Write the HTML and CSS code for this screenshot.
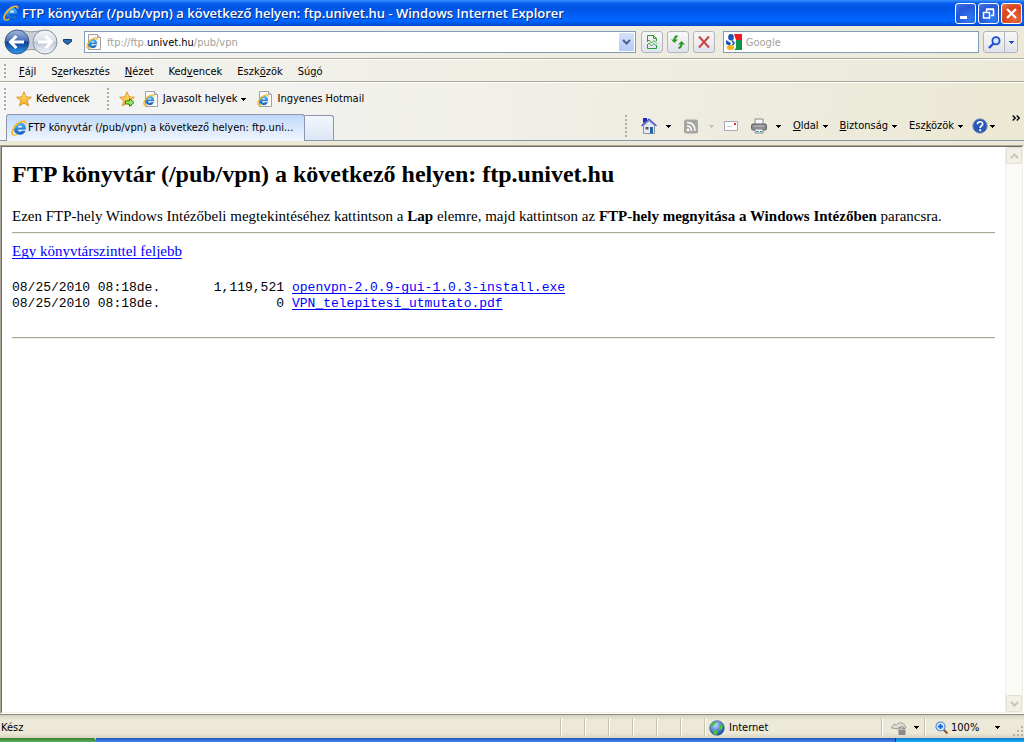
FILE: index.html
```html
<!DOCTYPE html>
<html lang="hu">
<head>
<meta charset="utf-8">
<title>FTP könyvtár (/pub/vpn) a következő helyen: ftp.univet.hu</title>
<link rel="stylesheet" href="styles.css">
</head>
<body>
<svg class="defs" aria-hidden="true">
  <defs>
    <linearGradient id="blueE" x1="0" y1="0" x2="0" y2="1"><stop offset="0" stop-color="#4fb8f4"/><stop offset="1" stop-color="#0b62c4"/></linearGradient>
    <linearGradient id="gold" x1="0" y1="0" x2="0" y2="1"><stop offset="0" stop-color="#ffe680"/><stop offset="1" stop-color="#f7a414"/></linearGradient>
    <linearGradient id="backG" x1="0" y1="0" x2="0" y2="1"><stop offset="0" stop-color="#a5badb"/><stop offset=".45" stop-color="#4a70b4"/><stop offset=".5" stop-color="#0d3c91"/><stop offset="1" stop-color="#2f9cf0"/></linearGradient>
    <linearGradient id="fwdG" x1="0" y1="0" x2="0" y2="1"><stop offset="0" stop-color="#f4f6f9"/><stop offset=".45" stop-color="#dde1e8"/><stop offset=".5" stop-color="#bcc5d3"/><stop offset="1" stop-color="#f3f7fb"/></linearGradient>
    <radialGradient id="globeG" cx=".4" cy=".3" r=".7"><stop offset="0" stop-color="#b8dcff"/><stop offset="1" stop-color="#1848a8"/></radialGradient>
    <symbol id="ie" viewBox="0 0 16 16">
      <path d="M5.400 9.300h9c.5-3.800-1.600-6.300-5.200-6.300C5.600 3 3 5.400 3 8.800s2.500 5.700 6 5.700c2.600 0 4.500-1.300 5.200-3.500h-3.400c-.4.600-1 .9-1.800.9-1.400 0-2.300-.9-2.400-2.600" fill="url(#blueE)" stroke="#0c4f9e" stroke-width=".4"/>
      <path d="M6.800 7.400c.2-1.200 1-1.900 2.200-1.900s2 .7 2.100 1.900z" fill="#e2f3ff"/>
      <path d="M2.500 15C-1.500 13.800 3.500 4.500 10 1.900c2.800-1.200 5-.8 4.600 1.800" fill="none" stroke="#f4b92c" stroke-width="1.700"/>
      <path d="M2.500 15c1.300.3 2.500-.2 3.800-1" fill="none" stroke="#f4b92c" stroke-width="1.400"/>
    </symbol>
    <symbol id="page" viewBox="0 0 16 16">
      <path d="M2.500.500h9l3 3v12h-12z" fill="#fafafa" stroke="#a2a2a2"/><path d="M11.500.500v3h3" fill="#ddd" stroke="#a2a2a2"/>
      <svg x="0" y="3" width="12" height="12"><use href="#ie"/></svg>
    </symbol>
    <symbol id="star" viewBox="0 0 16 16"><path d="M8 .8l2 5 5.400.4-4.200 3.500 1.500 5.300L8 12.100 3.300 15l1.500-5.300L.6 6.200 6 5.800z" fill="url(#gold)" stroke="#d08c1c" stroke-width=".8"/></symbol>
    <symbol id="staradd" viewBox="0 0 16 16"><use href="#star"/><path d="M6.500 10h4V7.700l4.500 3.800-4.500 3.800V13h-4z" fill="#9ae86a" stroke="#238b19"/></symbol>
    <symbol id="down" viewBox="0 0 5 3"><path d="M0 0h5v1H4v1H3v1H2V2H1V1H0z" fill="currentColor"/></symbol>
  </defs>
</svg>

<header class="titlebar">
  <svg class="i16"><use href="#ie"/></svg>
  <span class="caption">FTP könyvtár (/pub/vpn) a következő helyen: ftp.univet.hu - Windows Internet Explorer</span>
  <button class="win" aria-label="Kis méret"><svg viewBox="0 0 19 19"><path d="M4 12h7v3H4z" fill="#fff"/></svg></button>
  <button class="win" aria-label="Előző méret"><svg viewBox="0 0 19 19"><path d="M7.500 8V5.500h7v6H12M7 5h8" fill="none" stroke="#fff" stroke-width="1.500"/><path d="M4.500 8.500h6v5.500h-6zM4 8.500h7" fill="none" stroke="#fff" stroke-width="1.500"/></svg></button>
  <button class="win close" aria-label="Bezárás"><svg viewBox="0 0 19 19"><path d="M5 5l9 9M14 5l-9 9" stroke="#fff" stroke-width="2.200"/></svg></button>
</header>

<div class="addressbar">
  <div class="nav">
    <svg viewBox="0 0 56 30" aria-hidden="true"><path d="M8 4C16 1 20 4 28 4S40 1 48 4c9 4 8 18 0 21-8 2-12-2-20-2S16 28 8 25" fill="#c9cdd4" stroke="#8b929d"/></svg>
    <button class="round" aria-label="Vissza"><svg viewBox="0 0 26 26"><circle cx="13" cy="13" r="12" fill="url(#backG)" stroke="#3a5a8c"/><path d="M12.500 7L6.500 13l6 6M7.500 13H20" fill="none" stroke="#fff" stroke-width="3"/></svg></button>
    <button class="round" aria-label="Előre"><svg viewBox="0 0 26 26"><circle cx="13" cy="13" r="12" fill="url(#fwdG)" stroke="#8793a8"/><path d="M13.500 7l6 6-6 6M18.500 13H6" fill="none" stroke="#fff" stroke-width="3"/></svg></button>
  </div>
  <button class="plain recent" aria-label="Legutóbbi lapok"><svg viewBox="0 0 9 6"><path d="M.5.500h8v2L4.500 5.700.5 2.500z" fill="#2a68b0" stroke="#123a78"/></svg></button>
  <div class="field url">
    <svg class="i16"><use href="#page"/></svg>
    <span class="address" role="textbox" tabindex="0" aria-label="Cím">ftp://ftp.<b>univet.hu</b>/pub/vpn</span>
    <button class="combo" aria-label="Címek listája"><svg viewBox="0 0 9 6"><path d="M1 1l3.500 3.500L8 1" fill="none" stroke="#4d6185" stroke-width="2"/></svg></button>
  </div>
  <button class="tool" aria-label="Kompatibilitási nézet"><svg viewBox="0 0 16 16"><path d="M3.500 7V1.500h6l3 3V7M9.500 1.500v3h3M3.500 11v3.500h9V11" fill="none" stroke="#2d9a36"/><path d="M3 8l2-2 2.500 3L10 6.500 13 9.500M3 11l2-2 2.500 3L10 9.500l3 3" fill="none" stroke="#2d9a36" stroke-width=".9"/></svg></button>
  <button class="tool" aria-label="Frissítés"><svg viewBox="0 0 16 16"><path d="M7.500 2C5 2.500 4.500 4 4.500 6" fill="none" stroke="#2c9a20" stroke-width="2"/><path d="M1 5.500h7L4.500 9z" fill="#2c9a20"/><path d="M8.500 14c2.500-.5 3-2 3-4" fill="none" stroke="#2c9a20" stroke-width="2"/><path d="M8 10.500h7L11.500 7z" fill="#2c9a20"/></svg></button>
  <button class="tool" aria-label="Leállítás"><svg viewBox="0 0 16 16"><path d="M3 2.500l10 11M13 2.500l-10 11" stroke="#c94444" stroke-width="2"/></svg></button>
  <label class="field search">
    <svg class="i16" viewBox="0 0 16 16"><path d="M0 0h16v16H0z" fill="#fff"/><path d="M8 0h8v6h-6z" fill="#ee1c1c"/><path d="M10 6h6v10H8c4-3 1-5 2-10z" fill="#109447"/><path d="M0 6l5 3-1 3-4-2z" fill="#1b56b5"/><ellipse cx="5" cy="3.200" rx="2.800" ry="3.200" fill="#1b56b5"/><path d="M6 6.500l2 2.500-1.500 2" stroke="#1b56b5" stroke-width="1.600" fill="none"/><ellipse cx="4.500" cy="13.500" rx="3.700" ry="2.500" fill="#f5b317"/></svg>
    <input type="text" placeholder="Google" aria-label="Keresés">
  </label>
  <div class="split">
    <button aria-label="Keresés indítása"><svg class="mag" viewBox="0 0 13 13"><circle cx="8" cy="4.800" r="3.600" fill="#d6e9ff" stroke="#1b4fd0" stroke-width="1.800"/><path d="M5.500 7.500L1 12" stroke="#1b4fd0" stroke-width="2.400"/></svg></button>
    <button class="narrow" aria-label="Keresési beállítások"><svg class="arrow blue"><use href="#down"/></svg></button>
  </div>
</div>

<nav class="menubar">
  <i class="grip"></i>
  <button class="plain"><u>F</u>ájl</button>
  <button class="plain">S<u>z</u>erkesztés</button>
  <button class="plain"><u>N</u>ézet</button>
  <button class="plain">Ked<u>v</u>encek</button>
  <button class="plain">Eszk<u>ö</u>zök</button>
  <button class="plain">Sú<u>g</u>ó</button>
</nav>

<div class="shade">
<div class="favbar">
  <i class="grip"></i>
  <button class="plain fav"><svg class="i16"><use href="#star"/></svg>Kedvencek</button>
  <i class="grip"></i>
  <button class="plain add" aria-label="Hozzáadás a Kedvencek sávhoz"><svg class="i16"><use href="#staradd"/></svg></button>
  <button class="plain"><svg class="i16"><use href="#page"/></svg>Javasolt helyek<svg class="arrow"><use href="#down"/></svg></button>
  <button class="plain"><svg class="i16"><use href="#page"/></svg>Ingyenes Hotmail</button>
</div>

<div class="tabrow">
  <button class="tab"><svg class="i16"><use href="#ie"/></svg><span>FTP könyvtár (/pub/vpn) a következő helyen: ftp.uni...</span></button>
  <button class="newtab" aria-label="Új lap"></button>
  <div class="commands">
    <i class="grip"></i>
    <button class="plain home" aria-label="Kezdőlap"><svg class="i16" viewBox="0 0 16 16"><path d="M2.500 7.500L8 3l5.500 4.500v8h-11z" fill="#e6eaf4" stroke="#8b91a5"/><path d="M2 0h4v3L2 5z" fill="#1c2ab8"/><path d="M.5 8L8 1.200 15.500 8" fill="none" stroke="#4256d0" stroke-width="1.400"/><path d="M9 9h3v6.500H9z" fill="#2460a8"/><path d="M4.500 9h3v2.500h-3z" fill="#555"/></svg><svg class="arrow"><use href="#down"/></svg></button>
    <button class="plain feed" aria-label="Hírcsatornák" disabled><svg class="i16" viewBox="0 0 16 16"><rect x="1" y="1.500" width="14" height="14" rx="2" fill="#a5a5a0"/><circle cx="5" cy="12" r="1.400" fill="#fff"/><path d="M4 8c3 0 4.500 2 4.500 5M4 4.500c5 0 8 3 8 8.500" fill="none" stroke="#fff" stroke-width="1.500"/></svg><svg class="arrow dim"><use href="#down"/></svg></button>
    <button class="plain mail" aria-label="Levelek"><svg class="i16" viewBox="0 0 16 16"><path d="M1.500 3.500h13v9h-13z" fill="#fff" stroke="#a6a9b5"/><path d="M11 5h2v2h-2z" fill="#e0302a"/><path d="M4 8.500h5" stroke="#c8c8c8"/></svg></button>
    <button class="plain print" aria-label="Nyomtatás"><svg class="i16" viewBox="0 0 16 16"><path d="M4 1h8v6H4z" fill="#f5f5f5" stroke="#8a8a8a"/><rect x=".5" y="6" width="15" height="6" rx="1.500" fill="#8a8c90" stroke="#5d5f63"/><path d="M3 8h10" stroke="#c8c8c8"/><path d="M4 11h8v4H4z" fill="#eef6f8" stroke="#888"/><path d="M5 13.500h3" stroke="#3a9ad0"/><path d="M9 13.500h2" stroke="#3aa05a"/></svg><svg class="arrow"><use href="#down"/></svg></button>
    <button class="plain"><span><u>O</u>ldal</span><svg class="arrow"><use href="#down"/></svg></button>
    <button class="plain"><span><u>B</u>iztonság</span><svg class="arrow"><use href="#down"/></svg></button>
    <button class="plain"><span>Esz<u>k</u>özök</span><svg class="arrow"><use href="#down"/></svg></button>
    <button class="plain help" aria-label="Súgó"><svg class="i16" viewBox="0 0 16 16"><circle cx="8" cy="8" r="7.200" fill="#2857b8" stroke="#8793b5"/><path d="M5.500 6.200C5.500 3 10.700 3 10.700 6c0 1.800-2.500 1.800-2.500 3.900" fill="none" stroke="#fff" stroke-width="1.700"/><circle cx="8.200" cy="12.200" r="1.100" fill="#fff"/></svg><svg class="arrow"><use href="#down"/></svg></button>
    <button class="plain more" aria-label="További parancsok"><svg viewBox="0 0 8 6"><path d="M.7.500L3.200 3 .7 5.500M4.700.500L7.200 3 4.700 5.500" fill="none" stroke="#000" stroke-width="1.400"/></svg></button>
  </div>
</div>
</div>

<div class="viewport">
  <div class="frame">
  <main class="page">
    <h1>FTP könyvtár (/pub/vpn) a következő helyen: ftp.univet.hu</h1>
    <p>Ezen FTP-hely Windows Intézőbeli megtekintéséhez kattintson a <b>Lap</b> elemre, majd kattintson az <b>FTP-hely megnyitása a Windows Intézőben</b> parancsra.</p>
    <hr>
    <a href="#up">Egy könyvtárszinttel feljebb</a>
    <table class="listing">
      <tr><td class="date">08/25/2010 08:18de.</td><td class="size">1,119,521</td><td><a href="#exe">openvpn-2.0.9-gui-1.0.3-install.exe</a></td></tr>
      <tr><td class="date">08/25/2010 08:18de.</td><td class="size">0</td><td><a href="#pdf">VPN_telepitesi_utmutato.pdf</a></td></tr>
    </table>
    <hr>
  </main>
  <div class="scroll">
    <button disabled aria-label="Fel"><svg viewBox="0 0 9 6"><path d="M1 5l3.500-3.500L8 5" fill="none" stroke="#c9c7ba" stroke-width="2"/></svg></button>
    <button disabled aria-label="Le"><svg viewBox="0 0 9 6"><path d="M1 1l3.500 3.500L8 1" fill="none" stroke="#c9c7ba" stroke-width="2"/></svg></button>
  </div>
  </div>
</div>

<footer class="status">
  <span class="ready">Kész</span>
  <i class="cell"></i><i class="cell"></i><i class="cell"></i><i class="cell"></i><i class="cell"></i><i class="cell"></i>
  <span class="zone"><svg class="i16" viewBox="0 0 16 16"><circle cx="8" cy="8" r="7.300" fill="url(#globeG)" stroke="#2a4a88" stroke-width=".6"/><path d="M2.500 4c2-3 4-3 5-2L6 4 4 6 1.500 7zM10 6l2-2 2 2-1 3-2 1zM5 10l4 1-1 4c-3 0-4-2-4-3z" fill="#43c53c"/></svg>Internet</span>
  <button class="plain protect" aria-label="Védelem"><svg class="i16" viewBox="0 0 16 16"><path d="M.5 8l3-4 2 1c4-4 8-2 9.500 3l-4 1c-1-2-3-2-4-1l1 1z" fill="#deded9" stroke="#9a9a96"/><path d="M9 10V8.500c0-2.500 4-2.500 4 0V10" fill="none" stroke="#777"/><path d="M7.500 10h7v5h-7z" fill="#8a8a88"/></svg><svg class="arrow"><use href="#down"/></svg></button>
  <button class="plain zoom"><svg class="i13" viewBox="0 0 13 13"><path d="M8 8l4.500 4.500" stroke="#8a5a3a" stroke-width="2.200"/><circle cx="5.500" cy="5.500" r="4.500" fill="#d4ecff" stroke="#5b87c8" stroke-width="1.200"/><path d="M5.500 3v5M3 5.500h5" stroke="#1565d8" stroke-width="1.800"/></svg><span>100%</span><svg class="arrow"><use href="#down"/></svg></button>
  <svg class="sizer" viewBox="0 0 12 12"><path d="M9 0h2v2H9zM9 4h2v2H9zM9 8h2v2H9zM5 4h2v2H5zM5 8h2v2H5zM1 8h2v2H1z" fill="#b5b29f"/></svg>
</footer>
<div class="taskbar"><i class="start"></i><i class="tasks"></i><i class="tray"></i></div>
</body>
</html>
```

FILE: styles.css
```css
* { box-sizing: border-box; }
body {
  margin: 0;
  height: 100vh;
  display: flex;
  flex-direction: column;
  overflow: hidden;
  background: #ece9d8;
  color: #000;
  font: 11px/14px "DejaVu Sans Condensed", Tahoma, sans-serif;
}
button, input { font: inherit; color: inherit; padding: 0; margin: 0; border: 0; background: none; }
button { display: flex; align-items: center; justify-content: center; white-space: nowrap; flex: none; }
svg { display: block; flex: none; }
.defs { position: absolute; width: 0; height: 0; }
.i16 { width: 16px; height: 16px; }
.i13 { width: 13px; height: 13px; }
.arrow { width: 5px; height: 3px; }
.arrow.dim { color: #c4c1b4; }
.arrow.blue { color: #1b4fd0; }
.grip {
  width: 2px;
  height: 22px;
  flex: none;
  background: repeating-linear-gradient(#b0ad9f 0 2px, transparent 2px 4px);
}

.titlebar {
  height: 26px;
  flex: none;
  display: flex;
  align-items: center;
  gap: 2px;
  padding: 0 2px 0 3px;
  background: linear-gradient(#3a94ff 0, #0a5ff0 3px, #0054e3 8px, #0060fa 16px, #0066ff 21px, #0046c8 26px);
}
.caption {
  flex: 1;
  padding-left: 1px;
  color: #fff;
  font: 600 13px/18px "Open Sans", "Noto Sans", sans-serif;
  text-shadow: 1px 1px #0a2a80;
  white-space: nowrap;
  overflow: hidden;
}
.win {
  width: 21px;
  height: 21px;
  border: 1px solid #fff;
  border-radius: 3px;
  background: radial-gradient(circle at 70% 80%, #2f7cf5, #2458d8 60%, #4a78e8);
}
.win svg { width: 19px; height: 19px; }
.win.close { background: radial-gradient(circle at 70% 80%, #e8683c, #d9431c 60%, #e8835f); }

.addressbar {
  height: 33px;
  flex: none;
  display: flex;
  align-items: center;
  padding: 0 6px 0 4px;
  background: linear-gradient(90deg, #f3f3f1, #ece9d8);
  border-bottom: 1px solid #aca899;
}
.nav { position: relative; display: flex; gap: 2px; }
.nav > svg { position: absolute; left: 0; top: -1px; width: 55px; height: 28px; }
.round { position: relative; }
.round svg { width: 26px; height: 26px; }
.recent { width: 18px; margin-right: 8px; }
.recent svg { width: 9px; height: 6px; }
.field {
  display: flex;
  align-items: center;
  height: 22px;
  border: 1px solid #7f9db9;
  background: #fff;
}
.url { flex: 554; gap: 5px; padding: 0 1px; min-width: 0; }
.address { flex: 1; padding-top: 2px; color: #a5a29a; }
.address b { font-weight: 400; color: #000; }
.combo { width: 15px; height: 18px; border-radius: 1px; background: linear-gradient(#d5e1fc, #b4c9f7); }
.combo svg { width: 9px; height: 6px; }
.tool, .split {
  height: 22px;
  border: 1px solid #b3b5bd;
  border-radius: 3px;
  background: linear-gradient(#f8f8f8, #eeeef0 50%, #dfe2ee);
}
.tool { width: 22px; margin-left: 4px; }
.url + .tool { margin-left: 5px; }
.tool svg { width: 16px; height: 16px; }
.search { flex: 255; gap: 4px; margin-left: 8px; padding-left: 2px; min-width: 0; }
.search input { flex: 1; min-width: 0; padding-top: 2px; outline: 0; }
.search input::placeholder { color: #a5a29a; opacity: 1; }
.split { display: flex; margin-left: 4px; width: 35px; }
.split button { flex: 1; }
.split .narrow { flex: none; width: 13px; border-left: 1px solid #b3b5bd; }
.mag { width: 13px; height: 13px; }

.menubar {
  height: 23px;
  flex: none;
  display: flex;
  align-items: center;
  gap: 15px;
  padding-left: 4px;
  background: linear-gradient(90deg, #f3f3f1, #ece9d8);
  border-top: 1px solid #fff;
  border-bottom: 1px solid #aca899;
}
.menubar .grip { height: 14px; }
.menubar button { padding-top: 2px; }
.menubar .grip + button { margin-left: -2px; }

.shade {
  flex: none;
  background: linear-gradient(100deg, #f5f5f6, #f0efe8 50%, #ebe8d3);
  border-top: 1px solid #fff;
}
.favbar { height: 32px; display: flex; align-items: center; padding-left: 4px; }
.favbar button { gap: 4px; margin-left: 11px; }
.favbar .fav { margin: 0 17px 0 10px; }
.favbar .add { margin: 0 -3px 0 10px; }
.tabrow { height: 26px; display: flex; align-items: flex-end; border-bottom: 1px solid #8a96ad; padding-left: 6px; }
.tab {
  min-width: 299px;
  height: 27px;
  justify-content: flex-start;
  gap: 1px;
  padding: 0 8px 0 4px;
  border: 1px solid #8a96ad;
  border-bottom: 0;
  border-radius: 3px 3px 0 0;
  margin-bottom: -1px;
  background: linear-gradient(#bfd9fa, #f2f6fd);
}
.newtab {
  width: 29px;
  height: 25px;
  border: 1px solid #8a96ad;
  border-left: 0;
  border-bottom: 0;
  border-radius: 0 3px 0 0;
  background: linear-gradient(#f2f6fc, #dce7f6);
}
.commands { flex: 1; align-self: flex-start; display: flex; align-items: center; justify-content: flex-end; gap: 12px; padding-right: 4px; }
.commands button { gap: 4px; }
.commands .home, .commands .print { gap: 9px; }
.commands .home { margin-left: 2px; }
.commands .feed { gap: 10px; margin-right: -3px; }
.commands .help { gap: 2px; margin-left: -3px; }
.more { align-self: flex-start; margin-left: 5px; }
.more svg { width: 8px; height: 6px; }

.viewport {
  flex: 1;
  min-height: 0;
  display: flex;
  margin-top: 4px;
  border: 1px solid #aca899;
  border-right-color: #fff;
  border-bottom-color: #fff;
}
.frame {
  flex: 1;
  min-width: 0;
  display: flex;
  border: 1px solid #716f64;
  border-right-color: #f1efe2;
  border-bottom-color: #f1efe2;
  background: #fff;
}
.page { flex: 1; min-width: 0; overflow: hidden; padding: 14px 10px; font: 15px/18px "Liberation Serif", "Times New Roman", serif; }
.page h1 { margin: 0 0 19px; font-size: 24px; line-height: 27px; }
.page p { margin: 0; white-space: nowrap; }
.page hr { height: 2px; margin: 7px 0 8px; border: 0; border-top: 1px solid #aca899; border-bottom: 1px solid #f1efe2; }
.page a { color: #0000ff; text-underline-offset: 2px; text-decoration-skip-ink: none; }
.listing { margin: 20px 0 25px; border-collapse: collapse; font: 13px/16px "Liberation Mono", "Courier New", monospace; }
.listing td { padding: 0; }
.listing .date { width: 160px; }
.listing .size { width: 120px; padding-right: 8px; text-align: right; }
.scroll { width: 17px; display: flex; flex-direction: column; justify-content: space-between; background: #fafaf6; border-left: 1px solid #f1efe2; }
.scroll button { height: 17px; border: 1px solid #e2e0d3; border-radius: 2px; background: #f1efe6; }
.scroll svg { width: 9px; height: 6px; }

.status {
  height: 24px;
  flex: none;
  display: flex;
  align-items: center;
  padding-left: 1px;
  border-top: 1px solid #8a8879;
  background: linear-gradient(#d5d2c0, #ece9d8 5px, #ece9d8 18px, #d8d4c0);
}
.ready { flex: 1; padding-top: 2px; }
.cell, .zone, .protect, .zoom { height: 18px; border-left: 1px solid #c6c3b2; box-shadow: inset 1px 0 #fff; }
.cell { width: 24px; }
.zone { width: 177px; display: flex; align-items: center; gap: 4px; padding: 2px 0 0 4px; }
.protect { width: 43px; gap: 7px; padding: 2px 0 0 3px; }
.zoom { width: 88px; gap: 3px; padding: 2px 0 0 10px; justify-content: flex-start; }
.zoom span { flex: 1; text-align: left; }
.zoom .arrow { margin-right: 12px; }
.sizer { width: 12px; height: 12px; align-self: flex-end; }
.taskbar { height: 4px; flex: none; display: flex; }
.start { width: 96px; border-radius: 0 3px 0 0; background: linear-gradient(#2f7d2f, #62ad5c); }
.tasks { flex: 1; background: linear-gradient(#1f55c0, #3f8aec); }
.tray { width: 129px; border-left: 1px solid #0a3a80; background: linear-gradient(#0d78d0, #18b2f2); }
```
